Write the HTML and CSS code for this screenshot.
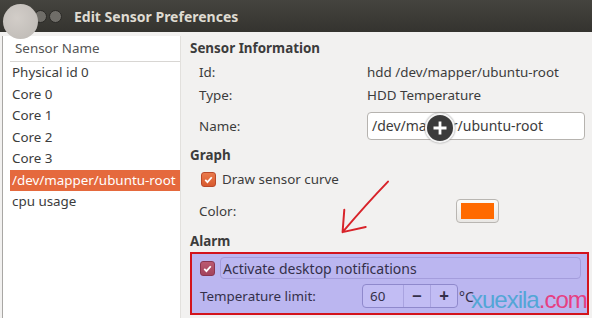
FILE: index.html
```html
<!DOCTYPE html>
<html lang="en">
<head>
  <meta charset="UTF-8" />
  <title>Edit Sensor Preferences</title>
  <link rel="stylesheet" href="styles.css">
</head>
<body>

<div class="titlebar">
  <span class="winbtn"></span>
  <span class="winbtn"></span>
  <span class="title">Edit Sensor Preferences</span>
</div>
<div class="blur-dot"></div>

<div class="window">
  <div class="sensors">
    <div class="sensors-head">Sensor Name</div>
    <div class="sensor">Physical id 0</div>
    <div class="sensor">Core 0</div>
    <div class="sensor">Core 1</div>
    <div class="sensor">Core 2</div>
    <div class="sensor">Core 3</div>
    <div class="sensor selected">/dev/mapper/ubuntu-root</div>
    <div class="sensor">cpu usage</div>
  </div>

  <div class="prefs">
    <div class="heading">Sensor Information</div>
    <div class="row row-id"><span class="label">Id:</span><span>hdd /dev/mapper/ubuntu-root</span></div>
    <div class="row row-type"><span class="label">Type:</span><span>HDD Temperature</span></div>
    <div class="row row-name"><span class="label">Name:</span><div class="entry">/dev/mapper/ubuntu-root</div></div>

    <div class="heading heading-graph">Graph</div>
    <div class="row row-check">
      <span class="check">
        <svg viewBox="0 0 16 16"><path d="M4 8.5l2.7 2.7L12 5.2"/></svg>
      </span>
      Draw sensor curve
    </div>
    <div class="row row-color"><span class="label">Color:</span><span class="color-btn"><span></span></span></div>

    <div class="heading heading-alarm">Alarm</div>
    <div class="alarm">
      <div class="alarm-check">
        <span class="check">
          <svg viewBox="0 0 16 16"><path d="M4 8.5l2.7 2.7L12 5.2"/></svg>
        </span>
        <span class="focus">Activate desktop notifications</span>
      </div>
      <div class="alarm-limit">
        <span class="label">Temperature limit:</span>
        <span class="spin">
          <span class="spin-value">60</span>
          <span class="spin-btn">&minus;</span>
          <span class="spin-btn">+</span>
        </span>
        <span class="unit">°C</span>
      </div>
    </div>
  </div>
</div>

<svg class="arrow" viewBox="0 0 70 70">
  <path d="M56 3Q30 30 3 62M5 36L3 62L30 56"/>
</svg>

<div class="cursor">
  <svg viewBox="0 0 28 28"><path d="M14 7v14M7 14h14"/></svg>
</div>

<div class="watermark">xuexila<span>.com</span></div>

</body>
</html>
```

FILE: styles.css
```css
body {
  margin: 0;
  width: 592px;
  height: 318px;
  overflow: hidden;
  background-color: #f2f1f0;
  font-family: "Noto Sans", "Open Sans", sans-serif;
  font-size: 13.4px;
  color: #3c3c3c;
  position: relative;
}

.titlebar {
  height: 32px;
  background: linear-gradient(#45443f, #34332f);
  display: flex;
  align-items: center;
  padding-left: 34px;
  gap: 2px;
}
.winbtn {
  width: 11px;
  height: 11px;
  border-radius: 50%;
  background: #6f6d68;
  border: 1px solid #2a2926;
}
.title {
  margin-left: 10px;
  color: #dfdbd2;
  font-weight: bold;
  font-size: 14px;
}

.blur-dot {
  position: absolute;
  left: 3px;
  top: 4px;
  width: 35px;
  height: 35px;
  border-radius: 50%;
  background: radial-gradient(circle at 40% 40%, #d2cdc8, #bcb8b4);
}

.window {
  display: flex;
  margin-top: 4px;
  height: 282px;
}

.sensors {
  margin-left: 2px;
  width: 177px;
  border-left: 1px solid #a9a7a4;
  border-right: 1px solid #e2e0dd;
  background: #fff;
}
.sensors-head {
  margin-left: 7px;
  height: 25px;
  line-height: 25px;
  padding-left: 5px;
  color: #555;
  border-bottom: 1px solid #d8d6d3;
}
.sensor {
  margin-left: 7px;
  height: 21.5px;
  line-height: 21.5px;
  padding-left: 2px;
  white-space: nowrap;
}
.sensor.selected {
  background: #e5693d;
  color: #fff;
}

.prefs {
  flex-grow: 1;
  padding: 2px 3px 0 9px;
}
.heading {
  height: 20px;
  line-height: 20px;
  font-weight: bold;
}
.heading-graph { margin-top: 4px; }
.heading-alarm { margin-top: 8px; }

.row {
  display: flex;
  align-items: center;
  height: 20px;
  padding-left: 9px;
}
.label {
  width: 168px;
  flex-shrink: 0;
}
.row-id { margin-top: 4px; }
.row-type { margin-top: 3px; }
.row-name { margin-top: 6px; height: 30px; }
.row-check { margin-top: 4px; padding-left: 11px; gap: 6px; }
.row-color { margin-top: 10px; height: 24px; }

.entry {
  width: 212px;
  height: 26px;
  line-height: 26px;
  padding-left: 4px;
  background: #fff;
  border: 1px solid #b6b3af;
  border-radius: 4px;
  font-size: 14px;
}

.check {
  width: 15px;
  height: 15px;
  border-radius: 3px;
  background: linear-gradient(#ea7a4c, #d85a2e);
  border: 1px solid #b9492a;
  box-sizing: border-box;
  display: flex;
  flex-shrink: 0;
}
.check svg {
  width: 13px;
  height: 13px;
  fill: none;
  stroke: #fff;
  stroke-width: 2.2;
}

.color-btn {
  margin-left: 89px;
  width: 43px;
  height: 24px;
  box-sizing: border-box;
  border: 1px solid #b9b6b2;
  border-radius: 4px;
  background: linear-gradient(#fbfbfa, #e9e7e4);
  display: flex;
  align-items: center;
  justify-content: center;
}
.color-btn span {
  width: 33px;
  height: 16px;
  background: #ff6a00;
}

.alarm {
  margin-top: 1px;
  height: 63px;
  box-sizing: border-box;
  border: 2px solid #d3141c;
  background: #bbb6f0;
  padding: 3px 6px 0 8px;
  color: #34304a;
}
.alarm-check {
  display: flex;
  align-items: center;
  gap: 5px;
  height: 22px;
}
.alarm .check {
  background: linear-gradient(#bb5a72, #a3435c);
  border-color: #8a3550;
}
.focus {
  flex-grow: 1;
  height: 22px;
  line-height: 21px;
  box-sizing: border-box;
  border: 1px solid #a49ddc;
  border-radius: 4px;
  padding-left: 2px;
  font-size: 14px;
}
.alarm-limit {
  display: flex;
  align-items: center;
  height: 24px;
  margin-top: 5px;
}
.alarm-limit .label { width: 162px; }
.spin {
  display: flex;
  height: 24px;
  box-sizing: border-box;
  border: 1px solid #8f89cc;
  border-radius: 4px;
  background: #c2bdf4;
}
.spin-value {
  width: 33px;
  padding-left: 7px;
  line-height: 22px;
}
.spin-btn {
  width: 26px;
  text-align: center;
  line-height: 21px;
  font-size: 17px;
  font-weight: bold;
  border-left: 1px solid #a9a3e0;
}
.unit { margin-left: 1px; font-size: 14px; }

.arrow {
  position: absolute;
  left: 340px;
  top: 176px;
  width: 60px;
  height: 66px;
  fill: none;
  stroke: #d8232a;
  stroke-width: 2.3;
  stroke-linecap: round;
  stroke-linejoin: round;
}

.cursor {
  position: absolute;
  left: 425px;
  top: 113px;
  width: 26px;
  height: 26px;
  border-radius: 50%;
  background: #3b3b3b;
  border: 2px solid #f4f4f4;
  box-shadow: 0 0 2px #888;
}
.cursor svg {
  width: 26px;
  height: 26px;
  fill: none;
  stroke: #fff;
  stroke-width: 3;
}

.watermark {
  position: absolute;
  left: 471px;
  top: 286px;
  font-family: "Liberation Sans", Arial, sans-serif;
  font-size: 24px;
  letter-spacing: -1px;
  color: #53a6d6;
}
.watermark span { color: #e63f83; }
```
